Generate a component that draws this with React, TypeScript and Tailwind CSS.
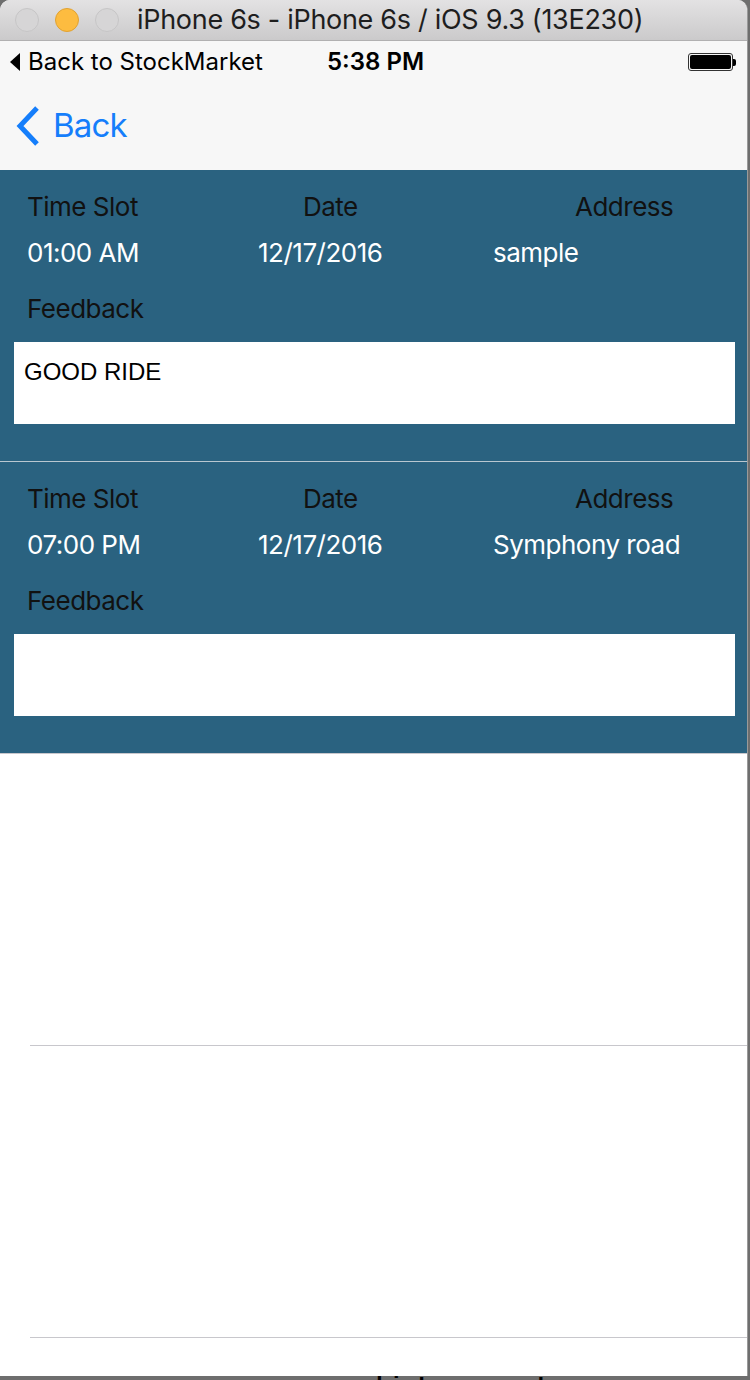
import { FC } from "react";

interface Ride {
  time: string;
  date: string;
  address: string;
  feedback: string;
}

const rides: Ride[] = [
  { time: "01:00 AM", date: "12/17/2016", address: "sample", feedback: "GOOD RIDE" },
  { time: "07:00 PM", date: "12/17/2016", address: "Symphony road", feedback: "" },
];

const RideCell: FC<{ ride: Ride; last?: boolean }> = ({ ride, last }) => (
  <div
    className={`bg-[#2a6280] h-[292px] pt-[22px] ${
      last ? "border-b border-[#c8c7cc]" : "border-b border-[#b9c7d0]"
    }`}
  >
    <div className="flex text-[26px] leading-[30px] text-[#111] tracking-[-0.5px]">
      <span className="pl-[27px] w-[303px]">Time Slot</span>
      <span className="w-[272px]">Date</span>
      <span>Address</span>
    </div>
    <div className="flex text-[26px] leading-[30px] text-white mt-[16px] tracking-[-0.5px]">
      <span className="pl-[27px] w-[258px]">{ride.time}</span>
      <span className="w-[235px]">{ride.date}</span>
      <span>{ride.address}</span>
    </div>
    <div className="pl-[27px] text-[26px] leading-[30px] text-[#111] mt-[26px] tracking-[-0.5px]">Feedback</div>
    <div className="ml-[14px] mr-[12px] mt-[18px] h-[82px] bg-white px-[10px] pt-[16px] text-[24px] leading-[28px] text-black font-['Liberation_Sans',Arial,sans-serif]">
      {ride.feedback}
    </div>
  </div>
);

const EmptyCell: FC = () => (
  <div className="h-[292px] bg-white flex flex-col justify-end">
    <div className="ml-[30px] h-px bg-[#c8c7cc]" />
  </div>
);

export default function App() {
  return (
    <div className="w-[750px] h-[1380px] bg-[#6e6e6e] overflow-hidden relative font-['Inter','Roboto',sans-serif]">
      <div className="absolute left-[376px] top-[1368px] text-[22px] font-bold text-black font-['DejaVu_Sans_Mono',monospace]">
        history.count
      </div>
      <div className="relative z-10 w-[748px] h-[1376px] bg-white rounded-t-[10px] overflow-hidden flex flex-col border-r border-[#9a9a9a]">
        {/* simulator title bar */}
        <div className="h-[41px] shrink-0 bg-gradient-to-b from-[#e3e2e3] to-[#cbcacb] border-b border-[#b1b0b1] flex items-center">
          <div className="flex items-center gap-[16px] pl-[15px]">
            <span className="w-[24px] h-[24px] rounded-full bg-[#d6d5d6] border border-[#c6c5c6]" />
            <span className="w-[24px] h-[24px] rounded-full bg-[#fdbc40] border border-[#e0a232]" />
            <span className="w-[24px] h-[24px] rounded-full bg-[#d6d5d6] border border-[#c6c5c6]" />
          </div>
          <span className="ml-[18px] text-[27px] text-[#1e1e1e] tracking-[-0.3px]">
            iPhone 6s - iPhone 6s / iOS 9.3 (13E230)
          </span>
        </div>

        {/* status bar */}
        <div className="h-[41px] shrink-0 bg-[#f7f7f7] flex items-center relative">
          <span className="pl-[10px] flex items-center text-[24px] text-black">
            <svg width="10" height="18" viewBox="0 0 10 18" className="mr-[8px]">
              <path d="M10 0 L0 9 L10 18 Z" fill="#000" />
            </svg>
            Back to StockMarket
          </span>
          <span className="absolute left-[327px] text-[24px] font-semibold text-black">5:38 PM</span>
          <div className="absolute left-[688px] top-[12px] flex items-center">
            <div className="w-[45px] h-[18px] rounded-[3px] border border-[#333] p-[1px]">
              <div className="w-full h-full bg-black rounded-[2px]" />
            </div>
            <div className="w-[3px] h-[7px] bg-black rounded-r-[2px]" />
          </div>
        </div>

        {/* nav bar */}
        <div className="h-[88px] shrink-0 bg-[#f7f7f7] flex items-center pl-[15px]">
          <svg width="26" height="42" viewBox="0 0 26 42" className="mr-[12px]">
            <path d="M22 3 L5 21 L22 39" stroke="#157efb" strokeWidth="5" fill="none" strokeLinecap="butt" />
          </svg>
          <span className="text-[33px] text-[#157efb] tracking-[-0.8px]">Back</span>
        </div>

        {/* table */}
        <div className="flex flex-col">
          {rides.map((r, i) => (
            <RideCell key={i} ride={r} last={i === rides.length - 1} />
          ))}
          <EmptyCell />
          <EmptyCell />
        </div>
      </div>
    </div>
  );
}
